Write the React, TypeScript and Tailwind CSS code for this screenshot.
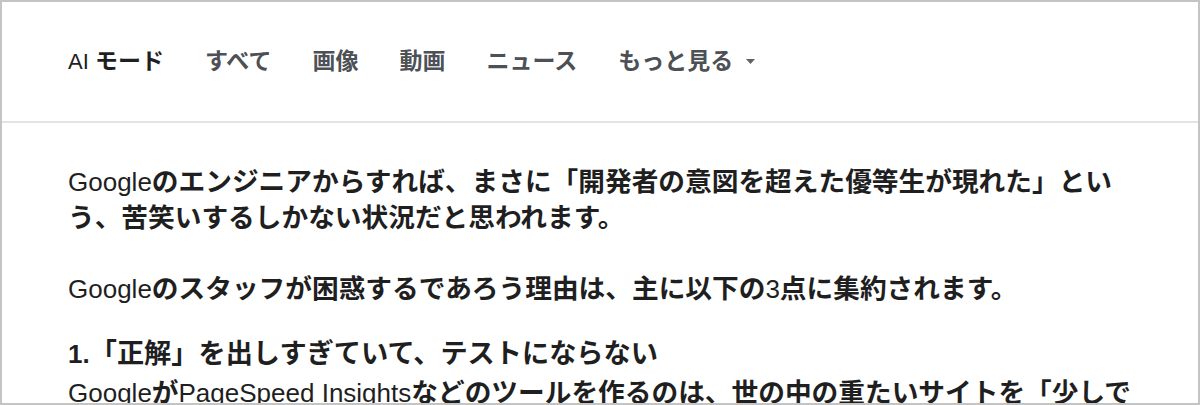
import React from "react";

const FONT = '"Liberation Sans", "Noto Sans CJK JP", sans-serif';

function T({
  text,
  boldLatin = false,
  heading = false,
}: {
  text: string;
  boldLatin?: boolean;
  heading?: boolean;
}) {
  const parts = text.split(/([\u0000-\u007F]+)/).filter((p) => p.length > 0);
  return (
    <>
      {parts.map((p, i) =>
        /^[\u0000-\u007F]+$/.test(p) ? (
          <span key={i} className={boldLatin ? "font-bold text-[26px]" : "font-normal text-[26px]"}>
            {p}
          </span>
        ) : (
          <span key={i} className={heading ? "font-bold text-[27.2px]" : "font-bold text-[26.7px]"}>
            {p}
          </span>
        )
      )}
    </>
  );
}

function Caret() {
  return (
    <svg width="9" height="5" viewBox="0 0 9 5" className="ml-[13px]">
      <path d="M0 0 L9 0 L4.5 5 Z" fill="#5f6368" />
    </svg>
  );
}

export default function App() {
  return (
    <div
      className="w-[1200px] h-[405px] overflow-hidden bg-white border-2 border-[#c4c4c4] box-border flex flex-col"
      style={{ fontFamily: FONT }}
    >
      <div className="h-[121px] shrink-0 border-b-2 border-[#e3e3e3] flex items-start pt-[45px] pl-[66px] gap-[41px] text-[23px] leading-[28px] text-[#4d5156]">
        <div className="text-[#1f1f1f] whitespace-pre">
          <span className="text-[22px]">AI </span>
          <span className="font-bold">モード</span>
        </div>
        <div className="font-bold">すべて</div>
        <div className="font-bold">画像</div>
        <div className="font-bold">動画</div>
        <div className="font-bold">ニュース</div>
        <div className="font-bold flex items-center">
          もっと見る
          <Caret />
        </div>
      </div>
      <div className="pl-[66px] pt-[41px] w-[1134px] text-[26px] leading-[36px] text-[#1f1f1f]">
        <p className="mb-[35px]">
          <T text="Googleのエンジニアからすれば、まさに「開発者の意図を超えた優等生が現れた」という、苦笑いするしかない状況だと思われます。" />
        </p>
        <p className="mb-[29px]">
          <T text="Googleのスタッフが困惑するであろう理由は、主に以下の3点に集約されます。" />
        </p>
        <p>
          <T text="1.「正解」を出しすぎていて、テストにならない" boldLatin heading />
        </p>
        <p className="mt-[3px]">
          <T text="GoogleがPageSpeed Insightsなどのツールを作るのは、世の中の重たいサイトを「少しでも速くしよう」と促すためです。" />
        </p>
      </div>
    </div>
  );
}
